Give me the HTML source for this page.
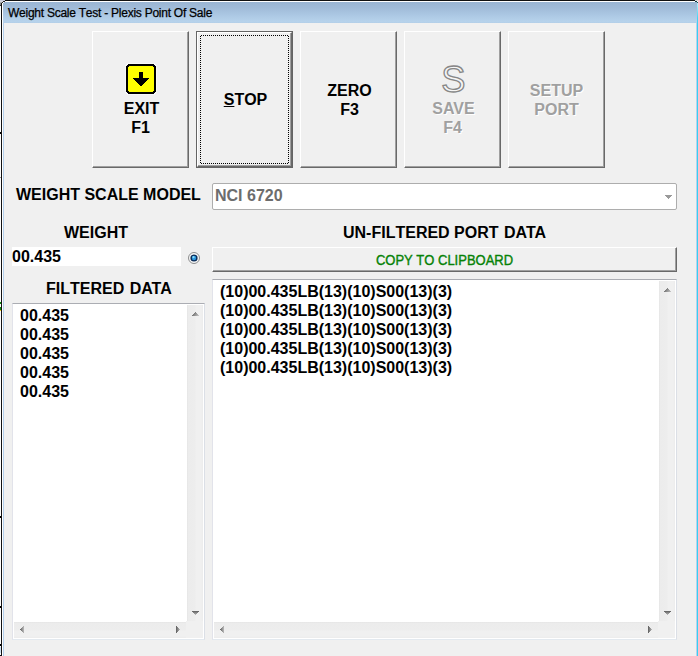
<!DOCTYPE html>
<html>
<head>
<meta charset="utf-8">
<title>Weight Scale Test - Plexis Point Of Sale</title>
<style>
html,body{margin:0;padding:0;}
body{width:698px;height:656px;overflow:hidden;background:#f0f0f0;position:relative;
  font-family:"Liberation Sans",sans-serif;font-kerning:none;}
.abs{position:absolute;}
#win{position:absolute;left:0;top:0;width:698px;height:656px;background:#f0f0f0;overflow:hidden;}
/* window chrome */
#e-l0{left:0;top:0;width:1px;height:656px;background:#fdfdfd;}
#e-l1{left:1px;top:3px;width:1px;height:653px;background:#111;}
#e-l2{left:2px;top:3px;width:1px;height:653px;background:#fff;}
#e-l3{left:3px;top:23px;width:1px;height:633px;background:#b4d0ec;}
#e-t0{left:5px;top:0;width:690px;height:1px;background:#111;}
#e-c0{left:695px;top:0;width:3px;height:1px;background:#d8d8d8;}
#e-c1{left:695px;top:1px;width:2px;height:1px;background:#123c40;}
#e-c2{left:697px;top:1px;width:1px;height:1px;background:#f4ffff;}
#e-c3{left:697px;top:2px;width:1px;height:1px;background:#1c5a60;}
#e-t1{left:5px;top:1px;width:690px;height:1px;background:#fff;}
#e-r0{left:696px;top:23px;width:1px;height:633px;background:#b9d1ea;}
#e-r1{left:697px;top:2px;width:1px;height:654px;background:linear-gradient(to bottom,#b4f0fb 0,#7fe2f8 8px,#45d3f5 16px,#35d0f5 24px,#35d0f5 100%);}
#title{left:3px;top:2px;width:694px;height:21px;
  background:linear-gradient(to bottom,#9ab5d3 0%,#a1bcd9 30%,#abc7e3 60%,#b6d2eb 92%,#b2cee8 100%);}
#title span{position:absolute;left:5px;top:2px;font-size:12px;line-height:18px;color:#000;white-space:nowrap;
  letter-spacing:-0.25px;-webkit-text-stroke:0.25px #000;}
.tick{left:0;width:1px;height:2px;background:#000;}
/* buttons */
.btn{position:absolute;top:31px;width:97px;height:137px;background:#f0f0f0;box-sizing:border-box;
  border-left:1px solid #fff;border-top:1px solid #fff;border-right:1px solid #696969;border-bottom:1px solid #696969;}
.btn .in{position:absolute;left:0;top:0;right:0;bottom:0;border-right:1px solid #a0a0a0;border-bottom:1px solid #a0a0a0;}
.btn.focus{border:1px solid #646464;}
.btn.focus .in{border-left:1px solid #fff;border-top:1px solid #fff;border-right:1px solid #696969;border-bottom:1px solid #696969;}
.btn.focus .in2{position:absolute;left:1px;top:1px;right:1px;bottom:1px;border-right:1px solid #a0a0a0;border-bottom:1px solid #a0a0a0;}
.bt{position:absolute;font-weight:bold;font-size:16px;line-height:19px;color:#000;white-space:nowrap;text-align:center;}
.dis{color:#a0a0a0;text-shadow:1px 1px 0 #fff;}
.lbl{position:absolute;font-weight:bold;font-size:16px;line-height:19px;color:#000;white-space:nowrap;}
/* focus dots */
.fh{position:absolute;height:1px;background:repeating-linear-gradient(90deg,#000 0,#000 1px,transparent 1px,transparent 2px);}
.fv{position:absolute;width:1px;background:repeating-linear-gradient(180deg,#000 0,#000 1px,transparent 1px,transparent 2px);}
/* boxes */
.box{position:absolute;box-sizing:border-box;background:#fff;border-top:1px solid #abadb3;border-left:1px solid #e2e3ea;border-right:1px solid #dbdfe6;border-bottom:1px solid #e3e9ef;}
.sbv{position:absolute;background:linear-gradient(to right,#e5e5e5 0,#ececec 1.5px,#ededed 8px,#f0f0f0 9px,#f0f0f0 14px,#ececec 16px);}
.sbh{position:absolute;background:linear-gradient(to bottom,#e5e5e5 0,#ececec 1.5px,#ededed 8px,#f0f0f0 9px,#f0f0f0 14px,#ececec 16px);}
.txt{position:absolute;font-weight:bold;font-size:16px;line-height:19px;color:#000;white-space:pre;}
</style>
</head>
<body>
<div id="win">
  <!-- title bar -->
  <div id="title" class="abs"><span>Weight Scale Test - Plexis Point Of Sale</span></div>
  <div id="e-l0" class="abs"></div><div id="e-l1" class="abs"></div><div id="e-l2" class="abs"></div><div id="e-l3" class="abs"></div>
  <div id="e-t0" class="abs"></div><div id="e-t1" class="abs"></div>
  <div id="e-r0" class="abs"></div><div id="e-r1" class="abs"></div>
  <div id="e-c0" class="abs"></div><div id="e-c1" class="abs"></div><div id="e-c2" class="abs"></div><div id="e-c3" class="abs"></div>
  <div class="abs" style="left:0;top:0;width:5px;height:1px;background:#c9cddf"></div>
  <div class="abs" style="left:0;top:1px;width:3px;height:1px;background:#d4d5dc"></div>
  <div class="abs" style="left:3px;top:1px;width:2px;height:1px;background:#222"></div>
  <div class="abs" style="left:0;top:2px;width:2px;height:1px;background:#a9a9a9"></div>
  <div class="abs" style="left:2px;top:2px;width:1px;height:1px;background:#222"></div>
  <div class="abs" style="left:3px;top:2px;width:1px;height:1px;background:#fff"></div>
  <div class="abs" style="left:0;top:3px;width:1px;height:2px;background:#8c8c8c"></div>
  <div class="abs" style="left:0;top:5px;width:1px;height:1px;background:#333"></div>
  <div class="abs tick" style="top:132px"></div>
  <div class="abs tick" style="top:177px;background:#9a9a9a;height:1px"></div>
  <div class="abs tick" style="top:302px;background:#0d8a0d"></div>
  <div class="abs tick" style="top:307px;background:#0d8a0d;height:3px"></div>
  <div class="abs tick" style="top:310px;background:#f0d020;height:1px"></div>
  <div class="abs tick" style="top:516px"></div>
  <div class="abs tick" style="top:606px"></div>
  <div class="abs tick" style="top:644px"></div>
  <div class="abs" style="left:0;top:647px;width:1px;height:6px;background:#cfe0f2"></div>
  <div class="abs" style="left:0;top:655px;width:1px;height:1px;background:#111"></div>

  <!-- EXIT -->
  <div class="btn" style="left:92px"><div class="in"></div></div>
  <svg class="abs" style="left:125px;top:63px" width="32" height="32" viewBox="-1 -1 32 32" shape-rendering="crispEdges">
    <path d="M1 -1H29V0H30V1H31V29H30V30H29V31H1V30H0V29H-1V1H0V0H1Z" fill="#f8f8f8"/>
    <path d="M2 0H28V1H29V2H30V28H29V29H28V30H2V29H1V28H0V2H1V1H2Z" fill="#000"/>
    <path d="M3 2H27V3H28V27H27V28H3V27H2V3H3Z" fill="#ffff00"/>
    <path d="M13 8H17V14H23V15H22V16H21V17H20V18H19V19H18V20H17V21H16V22H14V21H13V20H12V19H11V18H10V17H9V16H8V15H7V14H13Z" fill="#000"/>
  </svg>
  <div class="bt" style="left:93px;top:99px;width:97px">EXIT</div>
  <div class="bt" style="left:92px;top:118px;width:97px">F1</div>

  <!-- STOP -->
  <div class="btn focus" style="left:196px"><div class="in"></div><div class="in2"></div></div>
  <div class="fh" style="left:201px;top:35px;width:87px"></div>
  <div class="fh" style="left:201px;top:163px;width:87px"></div>
  <div class="fv" style="left:200px;top:36px;height:127px"></div>
  <div class="fv" style="left:288px;top:36px;height:127px"></div>
  <div class="bt" style="left:197px;top:90px;width:97px"><span style="text-decoration:underline;text-underline-offset:1px;text-decoration-thickness:1px">S</span>TOP</div>

  <!-- ZERO -->
  <div class="btn" style="left:300px"><div class="in"></div></div>
  <div class="bt" style="left:301px;top:81px;width:97px">ZERO</div>
  <div class="bt" style="left:301px;top:100px;width:97px">F3</div>

  <!-- SAVE -->
  <div class="btn" style="left:404px"><div class="in"></div></div>
  <svg class="abs" style="left:436px;top:58px" width="36" height="42" viewBox="0 0 36 42">
    <text x="5.2" y="34" font-family="Liberation Sans, sans-serif" font-size="36.3" fill="#f6f6f6" stroke="#878787" stroke-width="1.3">S</text>
  </svg>
  <div class="bt dis" style="left:405px;top:99px;width:97px;font-kerning:normal">SAVE</div>
  <div class="bt dis" style="left:404px;top:118px;width:97px">F4</div>

  <!-- SETUP PORT -->
  <div class="btn" style="left:508px"><div class="in"></div></div>
  <div class="bt dis" style="left:508px;top:81px;width:97px">SETUP</div>
  <div class="bt dis" style="left:508px;top:100px;width:97px">PORT</div>

  <!-- model row -->
  <div class="lbl" style="left:16px;top:185px">WEIGHT SCALE MODEL</div>
  <div class="abs" style="left:212px;top:183px;width:465px;height:27px;box-sizing:border-box;border:1px solid #adadad;border-radius:2px;background:#fff;"></div>
  <div class="lbl" style="left:215px;top:186px;color:#6d6d6d;">NCI 6720</div>
  <svg class="abs" style="left:665px;top:195px" width="7" height="4" viewBox="0 0 7 4" shape-rendering="crispEdges">
    <path d="M0 0H7V1H6V2H5V3H4V4H3V3H2V2H1V1H0Z" fill="#9a9a9a"/>
  </svg>

  <!-- weight -->
  <div class="lbl" style="left:64px;top:223px">WEIGHT</div>
  <div class="abs" style="left:12px;top:247px;width:169px;height:19px;background:#fff;"></div>
  <div class="lbl" style="left:12px;top:247px">00.435</div>
  <svg class="abs" style="left:187px;top:251px" width="14" height="14" viewBox="0 0 14 14">
    <circle cx="7" cy="7" r="5.5" fill="#f6f6f6" stroke="#8c8d8e" stroke-width="1"/>
    <circle cx="7" cy="7" r="3.6" fill="#0a2c58"/>
    <circle cx="7" cy="7" r="2.2" fill="#2a96de"/>
    <circle cx="6.5" cy="6.2" r="1.1" fill="#8adaf7"/>
  </svg>

  <!-- unfiltered label + copy button -->
  <div class="lbl" style="left:343px;top:223px">UN-FILTERED PORT <span style="font-kerning:normal;margin-left:1px">DATA</span></div>
  <div class="abs" style="left:212px;top:247px;width:465px;height:25px;box-sizing:border-box;background:#f0f0f0;border-left:1px solid #fff;border-top:1px solid #fff;border-right:1px solid #696969;border-bottom:1px solid #696969;">
    <div style="position:absolute;left:0;top:0;right:0;bottom:0;border-right:1px solid #a0a0a0;border-bottom:1px solid #a0a0a0;"></div>
  </div>
  <div class="abs" style="left:212px;top:252px;width:465px;text-align:center;font-weight:normal;font-size:13px;line-height:17px;letter-spacing:0px;color:#068206;-webkit-text-stroke:0.35px #068206;transform:scaleY(1.1);transform-origin:50% 50%;white-space:nowrap;">COPY TO CLIPBOARD</div>

  <!-- filtered data -->
  <div class="lbl" style="left:46px;top:279px">FILTERED <span style="font-kerning:normal;margin-left:1px">DATA</span></div>
  <div class="box" style="left:12px;top:303px;width:193px;height:337px;"></div>
  <div class="sbv" style="left:187px;top:305px;width:16px;height:316px;"></div>
  <div class="sbh" style="left:14px;top:622px;width:172px;height:16px;"></div>
  <div class="abs" style="left:186px;top:621px;width:17px;height:17px;background:#f0f0f0;"></div>
  <div class="txt" style="left:20px;top:306px">00.435
00.435
00.435
00.435
00.435</div>

  <!-- unfiltered data -->
  <div class="box" style="left:212px;top:279px;width:465px;height:361px;"></div>
  <div class="sbv" style="left:659px;top:281px;width:16px;height:340px;"></div>
  <div class="sbh" style="left:214px;top:622px;width:444px;height:16px;"></div>
  <div class="abs" style="left:658px;top:621px;width:17px;height:17px;background:#f0f0f0;"></div>
  <div class="txt" style="left:220px;top:282px">(10)00.435LB(13)(10)S00(13)(3)
(10)00.435LB(13)(10)S00(13)(3)
(10)00.435LB(13)(10)S00(13)(3)
(10)00.435LB(13)(10)S00(13)(3)
(10)00.435LB(13)(10)S00(13)(3)</div>

  <!-- scrollbar arrows -->
  <svg width="0" height="0" style="position:absolute"><defs>
    <linearGradient id="gv" x1="0" y1="0" x2="0" y2="1"><stop offset="0" stop-color="#5c5c5c"/><stop offset="1" stop-color="#bcbcbc"/></linearGradient>
    <linearGradient id="gd" x1="0" y1="0.3" x2="1" y2="0.7"><stop offset="0" stop-color="#606060"/><stop offset="1" stop-color="#c0c0c0"/></linearGradient>
    <linearGradient id="gh" x1="0" y1="0" x2="1" y2="0"><stop offset="0" stop-color="#5c5c5c"/><stop offset="1" stop-color="#bcbcbc"/></linearGradient>
  </defs></svg>
  <svg class="abs" style="left:192px;top:312px" width="7" height="4" viewBox="0 0 7 4" shape-rendering="crispEdges"><path d="M3 0H4V1H5V2H6V3H7V4H0V3H1V2H2V1H3Z" fill="url(#gd)"/></svg>
  <svg class="abs" style="left:192px;top:611px" width="7" height="4" viewBox="0 0 7 4" shape-rendering="crispEdges"><path d="M0 0H7V1H6V2H5V3H4V4H3V3H2V2H1V1H0Z" fill="url(#gv)"/></svg>
  <svg class="abs" style="left:20px;top:626px" width="4" height="7" viewBox="0 0 4 7" shape-rendering="crispEdges"><path d="M3 0H4V7H3V6H2V5H1V4H0V3H1V2H2V1H3Z" fill="url(#gh)"/></svg>
  <svg class="abs" style="left:176px;top:626px" width="4" height="7" viewBox="0 0 4 7" shape-rendering="crispEdges"><path d="M0 0H1V1H2V2H3V3H4V4H3V5H2V6H1V7H0Z" fill="url(#gh)"/></svg>

  <svg class="abs" style="left:664px;top:288px" width="7" height="4" viewBox="0 0 7 4" shape-rendering="crispEdges"><path d="M3 0H4V1H5V2H6V3H7V4H0V3H1V2H2V1H3Z" fill="url(#gd)"/></svg>
  <svg class="abs" style="left:664px;top:611px" width="7" height="4" viewBox="0 0 7 4" shape-rendering="crispEdges"><path d="M0 0H7V1H6V2H5V3H4V4H3V3H2V2H1V1H0Z" fill="url(#gv)"/></svg>
  <svg class="abs" style="left:220px;top:626px" width="4" height="7" viewBox="0 0 4 7" shape-rendering="crispEdges"><path d="M3 0H4V7H3V6H2V5H1V4H0V3H1V2H2V1H3Z" fill="url(#gh)"/></svg>
  <svg class="abs" style="left:648px;top:626px" width="4" height="7" viewBox="0 0 4 7" shape-rendering="crispEdges"><path d="M0 0H1V1H2V2H3V3H4V4H3V5H2V6H1V7H0Z" fill="url(#gh)"/></svg>
</div>
</body>
</html>
